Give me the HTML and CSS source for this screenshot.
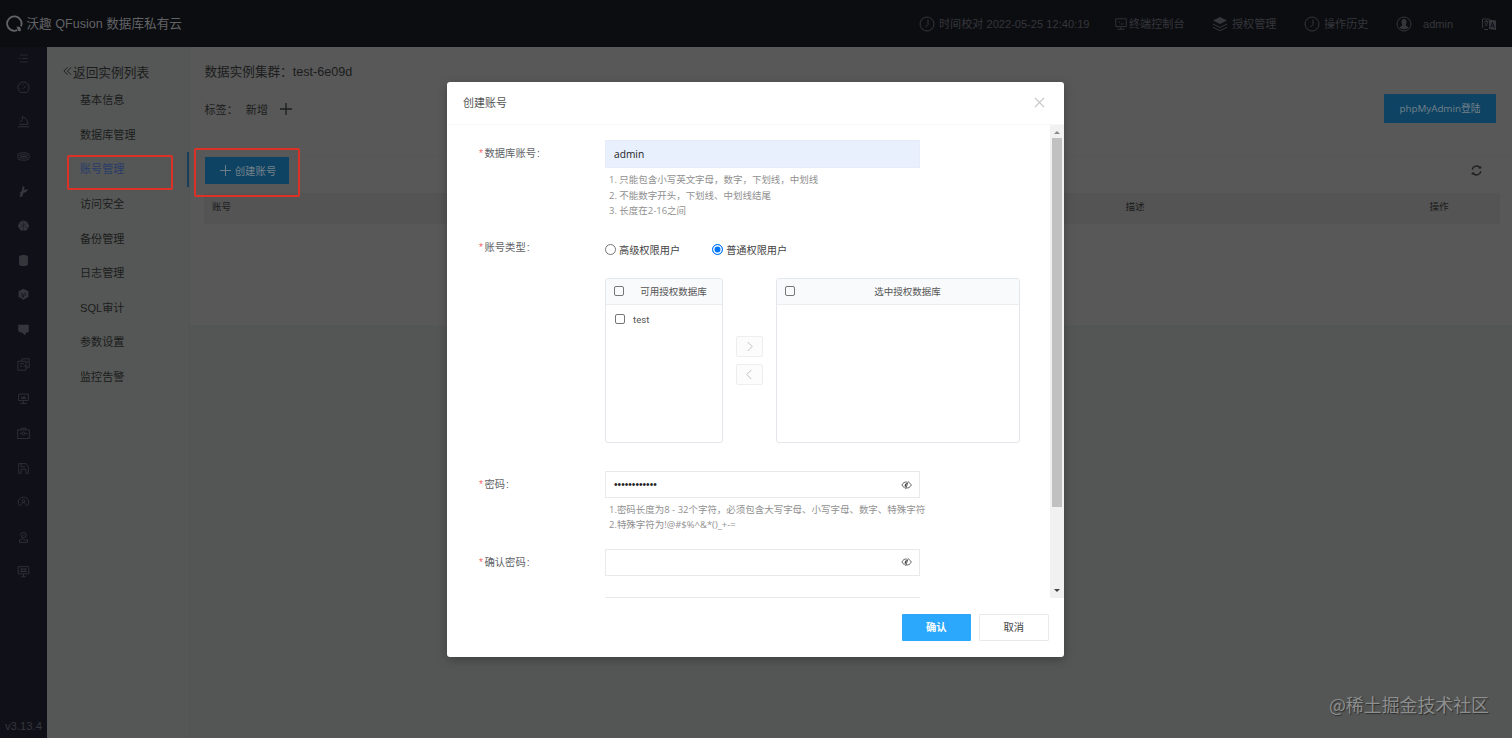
FILE: index.html
```
<!DOCTYPE html>
<html lang="zh-CN">
  <head>
    <meta charset="UTF-8" />
    <meta name="viewport" content="width=device-width, initial-scale=1.0" />
    <title>QFusion</title>
    <link rel="stylesheet" href="styles.css">
  </head>
  <body>
    <header class="topbar">
      <svg class="logo" viewBox="0 0 18 18"><path d="M12.2 15.2A7.2 7.2 0 1 1 16 11.3" /><path class="dot" d="M11.5 11.5l3.5.4 1 3-1 1.6-2-1z" /></svg>
      <h1>沃趣 QFusion 数据库私有云</h1>
      <nav class="tools">
        <div class="tool t-time">
          <svg viewBox="0 0 16 16"><circle cx="8" cy="8" r="7" /><path d="M9 3.5v5L6.5 11" /></svg>
          <span>时间校对 2022-05-25 12:40:19</span>
        </div>
        <div class="tool t-term">
          <svg viewBox="0 0 16 16"><path d="M2 2h12v9H2zM8 11v3M4 14h8M5 5l2 2M8 8h3" /></svg>
          <span>终端控制台</span>
        </div>
        <div class="tool t-auth">
          <svg viewBox="0 0 16 16"><path class="fill" d="M8 1l7 3.5L8 8 1 4.5z" /><path d="M1 8l7 3.5L15 8M1 11.2l7 3.5 7-3.5" /></svg>
          <span>授权管理</span>
        </div>
        <div class="tool t-history">
          <svg viewBox="0 0 16 16"><circle cx="8" cy="8" r="7" /><path d="M9 3.5v5L6.5 11" /></svg>
          <span>操作历史</span>
        </div>
        <div class="tool t-user">
          <svg viewBox="0 0 16 16"><circle cx="8" cy="8" r="7" /><path class="fill" d="M8 3c2 0 2.8 1.5 2.5 3.3-.2 1.5-.7 2-.7 3.200l2.700 1.700C11 14 5 14 3.500 11.200L6.200 9.500c0-1.200-.5-1.700-.7-3.200C5.200 4.500 6 3 8 3z" /></svg>
          <span>admin</span>
        </div>
        <div class="tool t-lang">
          <svg viewBox="0 0 16 16"><path d="M1.500 12V3h7M3.500 5.500h4M5.500 4v2M3.500 10c2-1 3-2.500 3.500-4.500M3.500 6.500l3 3.500M3 13.500h4" /><path class="fill" d="M8 3.500l7 1V14l-7-1z" /><path class="cut" d="M9.700 11.500l1.800-5 1.800 5.500M10.300 10h2.400" /></svg>
        </div>
      </nav>
    </header>

    <div class="main">
      <aside class="rail">
        <div class="rail-item fold"><svg viewBox="0 0 16 16"><path d="M3 3h11M6 8h8M3 13h11M1 8h3" /></svg></div>
        <div class="rail-item"><svg viewBox="0 0 16 16"><path d="M4 14a7 7 0 1 1 8 0zM7.500 9.500L11 6M3.500 9h1M5 5.500l.7.7M8 4v1" /></svg></div>
        <div class="rail-item"><svg viewBox="0 0 16 16"><path d="M1 14.500h14M3 11.500h10.500C13.500 7 11 3.500 6.500 2M6.500 2v4L4 9" /></svg></div>
        <div class="rail-item"><svg viewBox="0 0 16 16"><rect x=".7" y="3.500" width="14.600" height="9" rx="4.500" /><rect x="3.500" y="6" width="9" height="4" rx="1.500" /><path d="M5 8h6" /></svg></div>
        <div class="rail-item"><svg viewBox="0 0 16 16"><path class="fill" d="M7 1l2 1v4l5-1-3 4-3 .5-1 4-3 1.500L3 13l2-2-2-1 3-3z" /></svg></div>
        <div class="rail-item"><svg viewBox="0 0 16 16"><path class="fill" d="M8 1.500l5 2.500 2 5-3.500 5h-7L1 9l2-5z" /><path class="cut thin" d="M3 5l10 6M13 5L3 11M8 2v12" /></svg></div>
        <div class="rail-item"><svg viewBox="0 0 16 16"><path class="fill" d="M2.500 3c1-2.500 10-2.500 11 0v10c-1 2.500-10 2.500-11 0z" /></svg></div>
        <div class="rail-item"><svg viewBox="0 0 16 16"><path class="fill" d="M8 1l6 3v7l-4 2-2 2-2-2-4-2V4z" /><path class="cut" d="M6 6v5M10 5.500V10M8 8v4" /></svg></div>
        <div class="rail-item"><svg viewBox="0 0 16 16"><path class="fill" d="M1.500 2h13v9l-3 1-2 3-3-3-4-1-1-2z" /></svg></div>
        <div class="rail-item"><svg viewBox="0 0 16 16"><path d="M6 4V1h9v11h-3M1 4h10v11H1zM3.500 7h5M3.500 10h3M8 10h5M13 4v2" /></svg></div>
        <div class="rail-item"><svg viewBox="0 0 16 16"><path d="M2 2.500h12v8H2zM4 14h8M8 11v3M5 5l2 3 2-3 2 3M5 8h6" /></svg></div>
        <div class="rail-item"><svg viewBox="0 0 16 16"><path d="M.8 3.500h14.400v10.700H.8zM5 3.500V1.500h6v2M3.500 8H6M10 8h3" /><circle cx="8" cy="8" r="1.800" /></svg></div>
        <div class="rail-item"><svg viewBox="0 0 16 16"><path d="M2 2h9l3 4v8H11V9H5v5H2zM5 2v4h5" /></svg></div>
        <div class="rail-item"><svg viewBox="0 0 16 16"><path d="M3 12a6.500 6.500 0 1 1 10 0M4.500 12c1-5 6-5 7 0" /><circle cx="8" cy="6" r="1.700" /></svg></div>
        <div class="rail-item"><svg viewBox="0 0 16 16"><circle cx="8" cy="5" r="3.300" /><path d="M8 8.500L5 11H3v3h10v-3H8M7 5h2" /></svg></div>
        <div class="rail-item"><svg viewBox="0 0 16 16"><path d="M1.500 2h13v9h-13zM5 14.500h6M8 11v3M4 5h8M4 8h8M6 4v5M10 4v5" /></svg></div>
        <span class="version">v3.13.4</span>
      </aside>

      <aside class="menu">
        <div class="back"><svg viewBox="0 0 10 10"><path d="M5 .8L1 5l4 4.200M9 .8L5 5l4 4.200" /></svg>返回实例列表</div>
        <ul>
          <li>基本信息</li>
          <li>数据库管理</li>
          <li class="active">账号管理<i class="mark mark-menu"></i></li>
          <li>访问安全</li>
          <li>备份管理</li>
          <li>日志管理</li>
          <li>SQL审计</li>
          <li>参数设置</li>
          <li>监控告警</li>
        </ul>
      </aside>

      <section class="content">
        <div class="info">
          <div>
            <div class="cluster">数据实例集群：test-6e09d</div>
            <div class="tags"><span>标签：</span><span class="add">新增</span><svg viewBox="0 0 12 12"><path d="M6 0v12M0 6h12" /></svg></div>
          </div>
          <button class="btn-dim btn-php">phpMyAdmin登陆</button>
        </div>
        <div class="actions">
          <button class="btn-dim btn-create"><svg viewBox="0 0 12 12"><path d="M6 0v12M0 6h12" /></svg>创建账号<i class="mark mark-create"></i></button>
          <svg class="refresh" viewBox="0 0 12 12"><path d="M1.300 5A4.800 4.800 0 0 1 9.800 3M10.700 7A4.800 4.800 0 0 1 2.200 9" /><path class="tip" d="M8 3.800h3.200V1zM4 8.200H.8V11z" /></svg>
        </div>
        <div class="thead"><span>账号</span><span>描述</span><span>操作</span></div>
      </section>
    </div>

    <div class="dialog">
      <div class="dialog-head">
        <h2>创建账号</h2>
        <svg viewBox="0 0 12 12"><path d="M1 1l10 10M11 1L1 11" /></svg>
      </div>
      <div class="dialog-body">
        <form class="form">
          <div class="row row-name">
            <label><em>*</em>数据库账号<b>:</b></label>
            <div>
              <div class="input filled">admin</div>
              <div class="help"><p>1. 只能包含小写英文字母，数字，下划线，中划线</p><p>2. 不能数字开头，下划线、中划线结尾</p><p>3. 长度在2-16之间</p></div>
            </div>
          </div>
          <div class="row row-type">
            <label><em>*</em>账号类型<b>:</b></label>
            <div>
              <div class="radios">
                <span class="radio"><i></i>高级权限用户</span>
                <span class="radio on"><i></i>普通权限用户</span>
              </div>
              <div class="transfer">
                <div class="panel panel-left">
                  <div class="panel-head"><i class="check"></i><span>可用授权数据库</span></div>
                  <div class="option"><i class="check"></i>test</div>
                </div>
                <div class="moves">
                  <span><svg viewBox="0 0 10 10"><path d="M3 0l5 5-5 5" /></svg></span>
                  <span><svg viewBox="0 0 10 10"><path d="M7 0L2 5l5 5" /></svg></span>
                </div>
                <div class="panel panel-right">
                  <div class="panel-head"><i class="check"></i><span>选中授权数据库</span></div>
                </div>
              </div>
            </div>
          </div>
          <div class="row row-pwd">
            <label><em>*</em>密码<b>:</b></label>
            <div>
              <div class="input"><span class="dots">••••••••••••</span><svg class="eye" viewBox="0 0 12 10"><path d="M6.500 1.800C4 1.300 2 2.700 1 5c.8 1.500 1.800 2.500 3 3M8.500 2.200C10 3 10.800 4 11.200 5 10 7.500 8 8.600 5.700 8.200M8 1L5 9.300" /><path class="tip" d="M6.800 2.800L4.500 8C3.500 6 4 3 6.800 2.800z" /></svg></div>
              <div class="help"><p>1.密码长度为8 - 32个字符，必须包含大写字母、小写字母、数字、特殊字符</p><p>2.特殊字符为!@#$%^&amp;*()_+-=</p></div>
            </div>
          </div>
          <div class="row row-confirm">
            <label><em>*</em>确认密码<b>:</b></label>
            <div class="input"><svg class="eye" viewBox="0 0 12 10"><path d="M6.500 1.800C4 1.300 2 2.700 1 5c.8 1.500 1.800 2.500 3 3M8.500 2.200C10 3 10.800 4 11.200 5 10 7.500 8 8.600 5.700 8.200M8 1L5 9.300" /><path class="tip" d="M6.800 2.800L4.500 8C3.500 6 4 3 6.800 2.800z" /></svg></div>
          </div>
          <div class="row">
            <label></label>
            <div class="input"></div>
          </div>
        </form>
        <div class="scrollbar">
          <i class="arrow up"></i>
          <i class="thumb"></i>
          <i class="arrow down"></i>
        </div>
      </div>
      <div class="dialog-foot">
        <button class="ok">确认</button>
        <button class="cancel">取消</button>
      </div>
    </div>

    <div class="watermark">@稀土掘金技术社区</div>
  </body>
</html>
```
FILE: styles.css
```
* {
  box-sizing: border-box;
}
body {
  margin: 0;
  height: 738px;
  overflow: hidden;
  display: flex;
  flex-direction: column;
  background-color: #545655;
  color: #1b1c1c;
  font-family: "Liberation Sans", "Noto Sans CJK SC", sans-serif;
  font-size: 11.1px;
}
h1, h2, p, ul {
  margin: 0;
  padding: 0;
  font-weight: normal;
}
button {
  font-family: inherit;
  border: none;
  padding: 0;
}
svg {
  fill: none;
  stroke: currentColor;
  flex: none;
}
svg .fill, svg .dot, svg .tip {
  fill: currentColor;
  stroke: none;
}
svg .cut {
  stroke: #101118;
}
svg .thin {
  stroke-width: 0.5;
}

/* top bar */
.topbar {
  height: 47px;
  flex: none;
  display: flex;
  align-items: center;
  background-color: #0c0d11;
  color: #626366;
  padding-left: 4.5px;
}
.logo {
  width: 18px;
  height: 18px;
  stroke-width: 1.8;
  margin-right: 4px;
}
.topbar h1 {
  font-size: 12.6px;
  line-height: 20px;
  white-space: nowrap;
}
.tools {
  margin-left: auto;
  display: flex;
  align-items: center;
  color: #35363b;
}
.tool {
  display: flex;
  align-items: center;
  white-space: nowrap;
  line-height: 20px;
}
.tool svg {
  width: 16px;
  height: 16px;
  margin-right: 4px;
}
.t-time {
  width: 195px;
}
.t-term {
  width: 98px;
}
.t-term svg {
  width: 14px;
  height: 14px;
  margin-right: 1px;
}
.t-auth {
  width: 92px;
}
.t-history {
  width: 92px;
}
.t-user {
  width: 85px;
}
.t-user svg {
  margin-right: 11px;
}
.t-lang {
  width: 31px;
}

/* page */
.main {
  flex: 1;
  display: flex;
}
.rail {
  width: 47px;
  display: flex;
  flex-direction: column;
  align-items: center;
  background-color: #101118;
  color: #35363c;
}
.rail-item {
  height: 34.62px;
  display: flex;
  align-items: center;
}
.rail-item svg {
  width: 13px;
  height: 13px;
}
.rail .fold {
  height: 23px;
}
.fold svg {
  width: 11px;
  height: 11px;
}
.version {
  margin-top: auto;
  margin-bottom: 5px;
  font-size: 11.3px;
  line-height: 14px;
}
.menu {
  width: 143px;
  background-color: #555756;
  border-right: 1px solid #515454;
}
.back {
  display: flex;
  align-items: center;
  height: 20px;
  margin: 14px 0 2px;
  padding-left: 16px;
  font-size: 12.7px;
}
.back svg {
  width: 9px;
  height: 10px;
  margin-right: 1px;
}
.menu ul {
  list-style: none;
}
.menu li {
  height: 34.65px;
  line-height: 35px;
  padding-left: 33px;
}
.menu .active {
  position: relative;
  color: #293c69;
  border-right: 2px solid #1a3e57;
}
.mark {
  position: absolute;
  border: 2px solid #dc3225;
  border-radius: 2px;
}
.mark-menu {
  left: 20px;
  top: 3px;
  width: 106px;
  height: 35px;
}
.content {
  flex: 1;
  height: 278px;
  background-color: #585858;
}
.info {
  display: flex;
  justify-content: space-between;
  height: 110px;
  padding: 15px 16px 0 14.5px;
  border-bottom: 1px solid #555756;
}
.cluster {
  font-size: 12.6px;
  line-height: 20px;
}
.tags {
  display: flex;
  align-items: center;
  height: 20px;
  margin-top: 17px;
}
.tags .add {
  margin-left: 8px;
}
.tags svg {
  width: 12px;
  height: 12px;
  margin-left: 12px;
  stroke-width: 1.3;
}
.btn-dim {
  background-color: #0e4363;
  color: #74818a;
  white-space: nowrap;
}
.btn-php {
  width: 112px;
  height: 29px;
  margin-top: 32px;
  padding-bottom: 2px;
  font-family: "Open Sans", "Noto Sans CJK SC", sans-serif;
  font-size: 9.8px;
}
.actions {
  display: flex;
  justify-content: space-between;
  padding: 0 30px 0 15px;
}
.btn-create {
  position: relative;
  width: 84px;
  height: 27px;
  display: flex;
  align-items: center;
  justify-content: center;
  padding-left: 2px;
  font-size: 10.4px;
}
.btn-create svg {
  width: 11px;
  height: 11px;
  margin-right: 4px;
}
.mark-create {
  left: -11px;
  top: -9px;
  width: 106px;
  height: 49px;
}
.refresh {
  width: 11px;
  height: 11px;
  margin-top: 8px;
  stroke-width: 1.4;
}
.thead {
  display: grid;
  grid-template-columns: 913.5px 304px 1fr;
  margin: 9px 12px 0 14px;
  padding-left: 8px;
  height: 31px;
  line-height: 28px;
  font-size: 9.6px;
  background-color: #545454;
}

/* dialog */
.dialog {
  position: absolute;
  left: 447px;
  top: 82px;
  width: 617px;
  height: 574.5px;
  display: flex;
  flex-direction: column;
  background-color: #fff;
  border-radius: 3px;
  box-shadow: 0 3px 10px rgba(0, 0, 0, 0.25);
  color: #555;
}
.dialog-head {
  height: 43px;
  display: flex;
  align-items: center;
  justify-content: space-between;
  padding: 0 19px 2px 16px;
  border-bottom: 1px solid #f7f7f8;
}
.dialog-head h2 {
  font-size: 11px;
}
.dialog-head svg {
  width: 11px;
  height: 11px;
  color: #c4c4c4;
  stroke-width: 1.3;
}
.dialog-body {
  height: 473px;
  display: flex;
  overflow: hidden;
}
.form {
  flex: 1;
  padding: 15px 0 0 32px;
}
.row {
  display: grid;
  grid-template-columns: 126px 1fr;
}
.row label {
  height: 27px;
  line-height: 27px;
  font-size: 10.3px;
  color: #606266;
  white-space: nowrap;
}
.row em {
  color: #f56c6c;
  font-style: normal;
  margin-right: 1.5px;
}
.row b {
  font-weight: normal;
  margin-left: 1px;
}
.row-name {
  height: 94px;
}
.row-type {
  height: 237px;
}
.row-pwd {
  height: 77.5px;
}
.row-confirm {
  height: 48px;
}
.input {
  width: 315px;
  height: 27px;
  display: flex;
  align-items: center;
  padding: 0 7px 0 9px;
  border: 1px solid #e8e9eb;
  color: #222;
}
.input.filled {
  height: 28px;
  background-color: #e8effd;
  border-color: #e8ecfa;
  padding-left: 8px;
  font-family: "Open Sans", sans-serif;
  font-size: 10.2px;
}
.dots {
  font-size: 10.2px;
  margin-left: -1px;
}
.eye {
  width: 11px;
  height: 10px;
  margin-left: auto;
  color: #444;
  stroke-width: 0.9;
}
.help {
  padding: 4px 0 0 4px;
  font-family: "Open Sans", "Noto Sans CJK SC", sans-serif;
  font-size: 9.47px;
  line-height: 15.7px;
  color: #909090;
  white-space: nowrap;
}
.row-pwd .help {
  padding-top: 3.5px;
}
.radios {
  display: flex;
  gap: 32px;
  height: 30px;
  align-items: center;
  font-size: 10.2px;
  color: #444;
}
.radio {
  display: flex;
  align-items: center;
}
.radio i {
  width: 11px;
  height: 11px;
  margin-right: 3px;
  border: 1px solid #767676;
  border-radius: 50%;
}
.radio.on i {
  border-color: #0075ff;
  background-color: #0075ff;
  box-shadow: inset 0 0 0 1.5px #fff;
}
.transfer {
  display: flex;
  margin-top: 14px;
}
.panel {
  height: 165px;
  border: 1px solid #e3e6ea;
  border-radius: 3px;
  overflow: hidden;
}
.panel-left {
  width: 118px;
}
.panel-right {
  width: 244px;
}
.panel-head {
  height: 26px;
  display: flex;
  align-items: center;
  padding: 0 8px 1px;
  background-color: #f9fafc;
  border-bottom: 1px solid #ebedf0;
  font-size: 9.5px;
}
.panel-head span {
  flex: 1;
  text-align: center;
  padding-left: 9px;
}
.check {
  width: 10px;
  height: 10px;
  border: 1px solid #767676;
  border-radius: 2px;
}
.option {
  display: flex;
  align-items: center;
  gap: 8px;
  margin: 4px 0 0 9px;
  height: 20px;
  font-family: Roboto, sans-serif;
  font-size: 9.6px;
}
.moves {
  width: 53px;
  display: flex;
  flex-direction: column;
  align-items: center;
  gap: 7px;
  padding-top: 58px;
}
.moves span {
  width: 27px;
  height: 21px;
  display: flex;
  align-items: center;
  justify-content: center;
  background-color: #fcfcfc;
  border: 1px solid #eeeeef;
  border-radius: 2px;
  color: #b8b8b8;
}
.moves svg {
  width: 9px;
  height: 9px;
}
.scrollbar {
  width: 14px;
  display: flex;
  flex-direction: column;
  align-items: center;
  background-color: #f1f1f1;
}
.thumb {
  width: 10px;
  height: 369px;
  margin-top: 4px;
  background-color: #c1c1c1;
}
.arrow {
  border: 3px solid transparent;
}
.arrow.up {
  margin-top: 3px;
  border-bottom-color: #8a8a8a;
}
.arrow.down {
  margin-top: auto;
  margin-bottom: 3px;
  border-top-color: #444;
}
.dialog-foot {
  flex: 1;
  display: flex;
  justify-content: flex-end;
  align-items: flex-start;
  gap: 8px;
  padding: 16px 15.5px 0 0;
}
.dialog-foot button {
  width: 69.5px;
  height: 27px;
  padding-bottom: 2px;
  font-size: 10.3px;
  border-radius: 1px;
}
.ok {
  background-color: #2ba8fb;
  color: #fff;
  font-weight: bold;
}
.dialog-foot .cancel {
  background-color: #fff;
  color: #444;
  border: 1px solid #e8e9eb;
}
.watermark {
  position: absolute;
  right: 23px;
  bottom: 21.5px;
  font-family: "Noto Sans CJK SC", sans-serif;
  font-size: 17.9px;
  line-height: 26px;
  color: #8d8e8e;
  text-shadow: 1px 1px 1px #2d2e2e;
}
```
